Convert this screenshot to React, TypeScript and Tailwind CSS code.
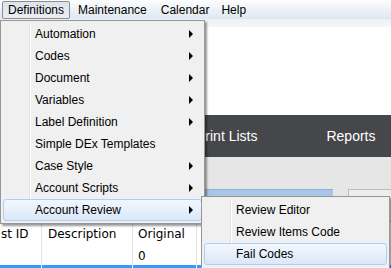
const menuFont = { fontFamily: '"Liberation Sans", Arial, sans-serif' };
const tableFont = { fontFamily: '"DejaVu Sans", Verdana, sans-serif' };

const definitions = [
  { label: "Automation", sub: true },
  { label: "Codes", sub: true },
  { label: "Document", sub: true },
  { label: "Variables", sub: true },
  { label: "Label Definition", sub: true },
  { label: "Simple DEx Templates", sub: false },
  { label: "Case Style", sub: true },
  { label: "Account Scripts", sub: true },
  { label: "Account Review", sub: true, active: true },
];

const reviewItems = [
  { label: "Review Editor" },
  { label: "Review Items Code" },
  { label: "Fail Codes", active: true },
];

function Arrow() {
  return (
    <span className="w-0 h-0 border-y-[4px] border-y-transparent border-l-[4px] border-l-black" />
  );
}

function MenuItem({
  label,
  sub,
  active,
}: {
  label: string;
  sub?: boolean;
  active?: boolean;
}) {
  return (
    <div
      className={[
        "h-[22px] flex items-center justify-between pl-[31px] pr-[8px] rounded-[3px] border",
        active
          ? "border-[#aecff7] bg-gradient-to-b from-[#f2f7fe] to-[#dbe8f8]"
          : "border-transparent",
      ].join(" ")}
    >
      <span className="text-[12px] text-black leading-none">{label}</span>
      {sub && <Arrow />}
    </div>
  );
}

export default function App() {
  return (
    <div className="relative w-[391px] h-[268px] overflow-hidden bg-white" style={menuFont}>
      {/* Menu bar */}
      <div className="h-[19px] flex items-center pl-[2px] bg-gradient-to-b from-[#fcfdfe] to-[#dfe7f1] text-[12px] text-black">
        <div className="h-[18px] flex items-center px-[5px] border border-[#8c8c8c] rounded-[2px] bg-gradient-to-b from-[#dfe4ea] to-[#e9eef4]">
          Definitions
        </div>
        <div className="px-[8px]">Maintenance</div>
        <div className="px-[6px]">Calendar</div>
        <div className="px-[6px]">Help</div>
      </div>
      <div className="h-[8px] bg-gradient-to-b from-[#eef0f3] to-[#f7f7f7]" />
      <div className="h-[88px] bg-white" />

      {/* Dark nav band */}
      <div className="h-[42px] bg-[#46474a] flex items-center text-[14px] text-white pl-[196px]">
        <span>Print Lists</span>
        <span className="ml-[69px]">Reports</span>
      </div>

      {/* Gray area */}
      <div className="h-[65px] bg-[#e6e6e6] pt-[32px] flex">
        <div className="w-[333px] h-[30px] bg-[#a9c6e8] border-t border-[#8fb0d8]" />
        <div className="ml-[15px] flex-1 h-[33px] bg-[#ededed] border border-[#bdbdbd] border-r-0" />
      </div>

      {/* Table */}
      <div style={tableFont} className="text-[12px] text-black">
        <div className="h-[24px] flex bg-white">
          <div className="w-[42px] flex items-center pl-[1px] border-r border-[#e2e2e2] whitespace-nowrap">
            st ID
          </div>
          <div className="w-[91px] flex items-center pl-[6px] border-r border-[#e2e2e2]">Description</div>
          <div className="w-[64px] flex items-center pl-[5px] border-r border-[#e2e2e2]">Original</div>
          <div className="flex-1" />
        </div>
        <div className="h-[19px] flex bg-white">
          <div className="w-[42px] border-r border-[#e2e2e2]" />
          <div className="w-[91px] border-r border-[#e2e2e2]" />
          <div className="w-[64px] flex items-center pl-[5px] border-r border-[#e2e2e2]">0</div>
          <div className="flex-1" />
        </div>
        <div className="h-[10px] flex bg-[#3399ff]">
          <div className="w-[42px] border-r border-white" />
          <div className="w-[91px] border-r border-white" />
          <div className="w-[64px] border-r border-white" />
          <div className="flex-1" />
        </div>
      </div>

      {/* Definitions dropdown */}
      <div className="absolute left-0 top-[20px] w-[205px] p-[2px] bg-[#f0f0f0] border border-[#979797] shadow-[2px_2px_2px_rgba(0,0,0,0.4)]">
        <div className="absolute top-[2px] bottom-[2px] left-[28px] w-[2px] border-l border-[#e2e3e3] border-r border-r-white" />
        <div className="relative">
          {definitions.map((d) => (
            <MenuItem key={d.label} {...d} />
          ))}
        </div>
      </div>

      {/* Account Review submenu */}
      <div className="absolute left-[201px] top-[196px] w-[189px] h-[74px] p-[2px] bg-[#f0f0f0] border border-[#979797] shadow-[2px_2px_2px_rgba(0,0,0,0.4)]">
        <div className="absolute top-[2px] bottom-[2px] left-[28px] w-[2px] border-l border-[#e2e3e3] border-r border-r-white" />
        <div className="relative">
          {reviewItems.map((d) => (
            <MenuItem key={d.label} {...d} />
          ))}
        </div>
      </div>
    </div>
  );
}
